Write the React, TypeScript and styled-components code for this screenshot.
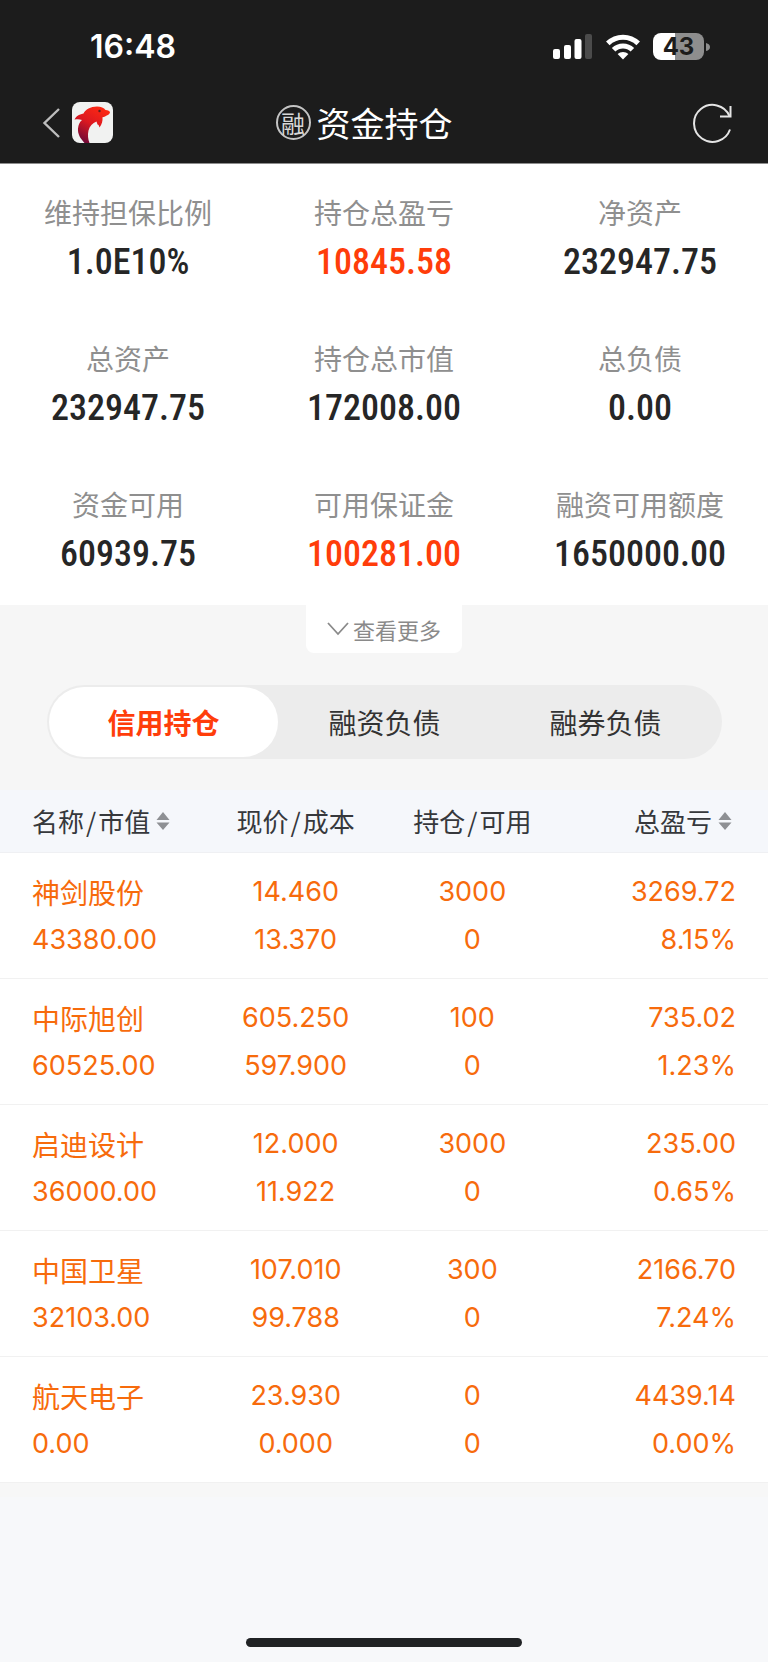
import React, { useState } from "react";
import styled, { createGlobalStyle, css } from "styled-components";

const cjk = `"Noto Sans CJK SC", sans-serif`;
const latin = `Inter, "Noto Sans CJK SC", sans-serif`;

const GlobalStyle = createGlobalStyle`
  *, *::before, *::after { box-sizing: border-box; }
  body { margin: 0; background: #f7f8fa; font-family: ${cjk}; color: #333; }
  button { border: 0; padding: 0; background: none; font: inherit; color: inherit; cursor: pointer; }
  h1, dl, dd { margin: 0; font-weight: 400; }
`;

const Page = styled.div`
  display: flex;
  flex-direction: column;
  min-height: 100vh;
`;

const Header = styled.header`
  background: #1c1c1c;
  color: #fff;
  border-bottom: 1px solid #8d8d8d;
`;

const StatusBar = styled.div`
  display: flex;
  justify-content: space-between;
  align-items: center;
  height: 82px;
  padding: 11px 58px 0 90px;
`;

const Clock = styled.time`
  font: 600 32px/40px ${latin};
`;

const StatusIcons = styled.div`
  display: flex;
  align-items: center;
  gap: 13px;
`;

const Battery = styled.div`
  display: flex;
  align-items: center;
  gap: 1px;
`;

const BatteryLevel = styled.div`
  display: flex;
  align-items: center;
  justify-content: center;
  width: 51px;
  height: 27px;
  border-radius: 8px;
  background: linear-gradient(to right, #fff 43%, #8e8e8e 43%);
  color: #1c1c1c;
  font: 700 24px/27px ${latin};
`;

const NavBar = styled.nav`
  display: grid;
  grid-template-columns: 1fr auto 1fr;
  align-items: center;
  height: 81px;
  padding: 0 34px 0 42px;
`;

const NavStart = styled.div`
  display: flex;
  align-items: center;
  gap: 12px;
`;

const IconButton = styled.button<{ $end?: boolean }>`
  display: flex;
  ${(p) => p.$end && css`justify-self: end;`}
`;

const Title = styled.h1`
  display: flex;
  align-items: center;
  gap: 6px;
  margin-right: 48px;
  font-size: 34px;
  line-height: 40px;
`;

const MarginBadge = styled.span`
  display: flex;
  align-items: center;
  justify-content: center;
  width: 35px;
  height: 35px;
  border: 2px solid #c4c4c4;
  border-radius: 50%;
  color: #d8d8d8;
  font-size: 24px;
  line-height: 24px;
`;

const Summary = styled.dl`
  display: grid;
  grid-template-columns: repeat(3, 1fr);
  row-gap: 56px;
  padding: 28px 0 31px;
  background: #fff;
`;

const Metric = styled.div`
  display: flex;
  flex-direction: column;
  align-items: center;
  gap: 10px;
`;

const MetricLabel = styled.dt`
  color: #8f8f8f;
  font-size: 28px;
  line-height: 40px;
`;

const MetricValue = styled.dd<{ $alert?: boolean }>`
  color: ${(p) => (p.$alert ? "#ff3d0a" : "#262626")};
  font: 500 36px/40px "Roboto Condensed", Roboto, sans-serif;
`;

const Switcher = styled.section`
  display: flex;
  flex-direction: column;
  align-items: center;
  padding-bottom: 31px;
  background: #f6f6f6;
`;

const MoreButton = styled.button`
  display: flex;
  align-items: center;
  justify-content: center;
  gap: 4px;
  width: 156px;
  height: 48px;
  border-radius: 0 0 8px 8px;
  background: #fff;
  color: #8a8a8a;
  font-size: 22px;
  line-height: 32px;
`;

const Tabs = styled.div`
  display: grid;
  grid-template-columns: repeat(3, 1fr);
  align-self: stretch;
  margin: 32px 46px 0 47px;
  padding: 2px 6px;
  border-radius: 37px;
  background: #ececec;
`;

const Tab = styled.button<{ $active: boolean }>`
  height: 70px;
  margin: 0 -4px;
  border-radius: 35px;
  font-size: 28px;
  line-height: 40px;
  ${(p) =>
    p.$active &&
    css`
      background: #fff;
      color: #ff3d0a;
      font-weight: 700;
    `}
`;

const Holdings = styled.table`
  width: 100%;
  table-layout: fixed;
  border-collapse: collapse;
  background: #fff;
`;

const HeadCell = styled.th<{ $align: string }>`
  height: 62px;
  padding: 0;
  background: #f5f7fb;
  border-bottom: 1px solid #eff0f3;
  color: #36383c;
  font-size: 26px;
  font-weight: 400;
  line-height: 40px;
  text-align: ${(p) => p.$align};
  white-space: nowrap;
  &:first-child { padding-left: 32px; }
  &:last-child { padding-right: 36px; }
`;

const Slash = styled.span`
  margin: 0 2px;
`;

const SortButton = styled.button`
  display: inline-flex;
  align-items: center;
  gap: 6px;
`;

const Cell = styled.td<{ $align: string }>`
  padding: 15px 0 14px;
  border-bottom: 1px solid #f1f1f1;
  color: #f76b0c;
  text-align: ${(p) => p.$align};
  white-space: nowrap;
  &:first-child { padding-left: 32px; }
  &:last-child { padding-right: 32px; }
`;

const Figure = styled.div`
  font: 400 27px/48px ${latin};
`;

const StockName = styled.div`
  font-size: 28px;
  line-height: 48px;
`;

const Footer = styled.footer`
  display: flex;
  flex: 1;
  align-items: flex-end;
  justify-content: center;
  padding: 32px 0 15px;
  border-top: 14px solid #f7f7f7;
`;

const HomeIndicator = styled.div`
  width: 36%;
  height: 9px;
  border-radius: 5px;
  background: #202224;
`;

const SignalIcon = () => (
  <svg width="40" height="26" viewBox="0 0 40 26" fill="#fff" aria-hidden="true">
    <rect x="0" y="15" width="7" height="10" rx="2" />
    <rect x="11" y="11" width="7" height="14" rx="2" />
    <rect x="21.5" y="5" width="7" height="20" rx="2" />
    <rect x="32" y="0" width="7" height="25" rx="2" fill="#4b4b4b" />
  </svg>
);

const WifiIcon = () => (
  <svg width="34" height="26" viewBox="0 0 34 26" fill="none" stroke="#fff" strokeWidth="5" aria-hidden="true">
    <path d="M1.800 9.400a21.600 21.600 0 0 1 30.400 0" />
    <path d="M7.600 15.800a13.400 13.400 0 0 1 18.800 0" />
    <path d="M11.600 20a8 8 0 0 1 10.800 0L17 25.500Z" fill="#fff" stroke="none" />
  </svg>
);

const BatteryTip = () => (
  <svg width="5" height="10" viewBox="0 0 5 10" aria-hidden="true">
    <path d="M1 1q4 1 4 4t-4 4Z" fill="#8e8e8e" />
  </svg>
);

const BackIcon = () => (
  <svg width="18" height="30" viewBox="0 0 18 30" fill="none" stroke="#bdbdbd" strokeWidth="2.4" aria-hidden="true">
    <path d="M17 1 2.5 15 17 29" />
  </svg>
);

const DolphinLogo = () => (
  <svg width="41" height="41" viewBox="0 0 41 41" aria-hidden="true">
    <defs>
      <linearGradient id="dolphin" x1="0.8" y1="0" x2="0.25" y2="1">
        <stop offset="0" stopColor="#ff2a12" />
        <stop offset="0.5" stopColor="#dc1820" />
        <stop offset="1" stopColor="#6b0838" />
      </linearGradient>
    </defs>
    <rect width="41" height="41" rx="8" fill="#f1f2f1" />
    <path
      d="M2.500 17.500C4 14.500 6.500 12.500 11.500 11.500C13.500 7.500 18.500 4.500 25 4.500C29 4.500 32 6 33.500 8C36 8.200 38 9 38 10.500C37.500 12.500 34 14.300 30.500 15.300C30.800 19 30 22.500 27.500 25.500C27 23.500 26.500 22.500 25.500 22.500L24.500 19.500C20.500 21 17.500 24.500 16.500 28.500C15.500 33 16 37 17.500 41H12.500C8.500 36.500 5.500 32 6 26.500C6.400 22.500 7.800 20 10 18C7.500 17 5 17.200 2.500 17.500Z"
      fill="url(#dolphin)"
    />
    <circle cx="27.500" cy="9" r="1.200" fill="#5a2020" />
  </svg>
);

const RefreshIcon = () => (
  <svg width="42" height="42" viewBox="0 0 42 42" fill="none" stroke="#e4e4e4" strokeWidth="2" aria-hidden="true">
    <path d="M38 27.500A18.500 18.500 0 1 1 37.500 14" />
    <path d="M38.500 4v10.500H28" />
  </svg>
);

const ChevronDown = () => (
  <svg width="22" height="14" viewBox="0 0 22 14" fill="none" stroke="#8a8a8a" strokeWidth="1.8" aria-hidden="true">
    <path d="m1 1 10 11L21 1" />
  </svg>
);

const SortIcon = () => (
  <svg width="14" height="18" viewBox="0 0 14 18" fill="#8e9094" aria-hidden="true">
    <path d="M7 0l6.500 8H.5ZM.5 10.500h13L7 18Z" />
  </svg>
);

const metrics = [
  { label: "维持担保比例", value: "1.0E10%" },
  { label: "持仓总盈亏", value: "10845.58", alert: true },
  { label: "净资产", value: "232947.75" },
  { label: "总资产", value: "232947.75" },
  { label: "持仓总市值", value: "172008.00" },
  { label: "总负债", value: "0.00" },
  { label: "资金可用", value: "60939.75" },
  { label: "可用保证金", value: "100281.00", alert: true },
  { label: "融资可用额度", value: "1650000.00" },
];

const tabs = ["信用持仓", "融资负债", "融券负债"];

const columns = [
  { parts: ["名称", "市值"], align: "left", sortable: true },
  { parts: ["现价", "成本"], align: "center" },
  { parts: ["持仓", "可用"], align: "center" },
  { parts: ["总盈亏"], align: "right", sortable: true },
];

const holdings = [
  { name: "神剑股份", value: "43380.00", figures: [["14.460", "13.370"], ["3000", "0"], ["3269.72", "8.15%"]] },
  { name: "中际旭创", value: "60525.00", figures: [["605.250", "597.900"], ["100", "0"], ["735.02", "1.23%"]] },
  { name: "启迪设计", value: "36000.00", figures: [["12.000", "11.922"], ["3000", "0"], ["235.00", "0.65%"]] },
  { name: "中国卫星", value: "32103.00", figures: [["107.010", "99.788"], ["300", "0"], ["2166.70", "7.24%"]] },
  { name: "航天电子", value: "0.00", figures: [["23.930", "0.000"], ["0", "0"], ["4439.14", "0.00%"]] },
];

const ColumnName = ({ parts }: { parts: string[] }) => (
  <span>
    {parts[0]}
    {parts[1] && (
      <>
        <Slash>/</Slash>
        {parts[1]}
      </>
    )}
  </span>
);

export default function App() {
  const [active, setActive] = useState(0);
  return (
    <Page>
      <GlobalStyle />
      <Header>
        <StatusBar>
          <Clock>16:48</Clock>
          <StatusIcons>
            <SignalIcon />
            <WifiIcon />
            <Battery>
              <BatteryLevel>43</BatteryLevel>
              <BatteryTip />
            </Battery>
          </StatusIcons>
        </StatusBar>
        <NavBar>
          <NavStart>
            <IconButton aria-label="返回"><BackIcon /></IconButton>
            <DolphinLogo />
          </NavStart>
          <Title>
            <MarginBadge>融</MarginBadge>
            资金持仓
          </Title>
          <IconButton $end aria-label="刷新"><RefreshIcon /></IconButton>
        </NavBar>
      </Header>

      <Summary>
        {metrics.map((m) => (
          <Metric key={m.label}>
            <MetricLabel>{m.label}</MetricLabel>
            <MetricValue $alert={m.alert}>{m.value}</MetricValue>
          </Metric>
        ))}
      </Summary>

      <Switcher>
        <MoreButton>
          <ChevronDown />
          查看更多
        </MoreButton>
        <Tabs role="tablist">
          {tabs.map((name, i) => (
            <Tab key={name} role="tab" aria-selected={i === active} $active={i === active} onClick={() => setActive(i)}>
              {name}
            </Tab>
          ))}
        </Tabs>
      </Switcher>

      <Holdings>
        <colgroup>
          <col width="27%" />
          <col width="23%" />
          <col width="23%" />
          <col width="27%" />
        </colgroup>
        <thead>
          <tr>
            {columns.map((c) => (
              <HeadCell key={c.parts[0]} $align={c.align} scope="col">
                {c.sortable ? (
                  <SortButton>
                    <ColumnName parts={c.parts} />
                    <SortIcon />
                  </SortButton>
                ) : (
                  <ColumnName parts={c.parts} />
                )}
              </HeadCell>
            ))}
          </tr>
        </thead>
        <tbody>
          {holdings.map((row) => (
            <tr key={row.name}>
              <Cell $align="left">
                <StockName>{row.name}</StockName>
                <Figure>{row.value}</Figure>
              </Cell>
              {row.figures.map(([top, bottom], i) => (
                <Cell key={i} $align={columns[i + 1].align}>
                  <Figure>{top}</Figure>
                  <Figure>{bottom}</Figure>
                </Cell>
              ))}
            </tr>
          ))}
        </tbody>
      </Holdings>

      <Footer>
        <HomeIndicator />
      </Footer>
    </Page>
  );
}
